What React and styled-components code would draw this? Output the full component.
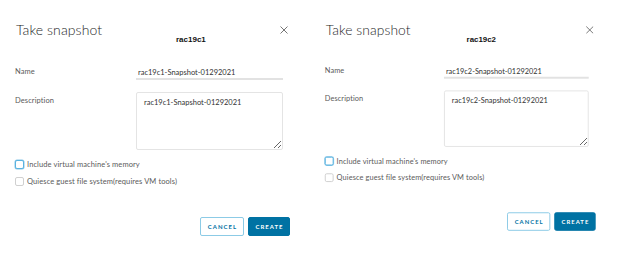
import React from 'react';
import styled, { createGlobalStyle } from 'styled-components';

const Global = createGlobalStyle`
  html, body {
    margin: 0;
    padding: 0;
    background: #ffffff;
  }
  body {
    font-family: Lato, "Open Sans", sans-serif;
    color: #333;
  }
`;

const Page = styled.div`
  display: flex;
  width: 624px;
  height: 265px;
  overflow: hidden;
`;

const Panel = styled.div`
  width: 310px;
  padding-left: 15px;
  box-sizing: border-box;
  transform-origin: 0 28px;
  transform: ${p => p.$scale ? `scale(${p.$scale})` : 'none'};
`;

const Dialog = styled.div`
  width: 275px;
  display: flex;
  flex-direction: column;
`;

const Header = styled.div`
  display: flex;
  align-items: flex-start;
  height: 20px;
  margin-top: 20px;
`;

const Title = styled.h3`
  margin: 0 0 0 1px;
  width: ${p => p.$nameX}px;
  font-size: 14px;
  font-weight: 300;
  line-height: 20px;
  color: #1e1e1e;
  letter-spacing: 0.1px;
`;

const VmName = styled.span`
  flex: 1;
  margin-top: 15px;
  font-family: "Liberation Sans", Arial, sans-serif;
  font-size: 8px;
  font-weight: 700;
  color: #111;
  line-height: 10px;
`;

const Close = styled.button`
  width: 12px;
  height: 12px;
  margin-top: 4px;
  padding: 0;
  border: 0;
  background: none;
  display: flex;
  align-items: center;
  justify-content: center;
`;

const Form = styled.div`
  display: grid;
  grid-template-columns: 121px 147px;
  row-gap: 12px;
  margin-top: 26px;
`;

const Label = styled.label`
  font-size: 7.5px;
  color: #5a5a5a;
  line-height: 12px;
  letter-spacing: 0.1px;
  padding-top: ${p => p.$pad || 0}px;
`;

const TextInput = styled.input`
  height: 12px;
  padding: 0 0 0 2px;
  border: 0;
  border-bottom: 2px solid #e2e2e2;
  font-family: Lato, "Open Sans", sans-serif;
  font-size: 7.5px;
  color: #333;
  outline: none;
  box-sizing: content-box;
  width: 145px;
`;

const TextArea = styled.textarea`
  height: 58px;
  box-sizing: border-box;
  padding: 5px 7px;
  border: 1px solid #e4e4e4;
  border-radius: 2px;
  font-family: Lato, "Open Sans", sans-serif;
  font-size: 7.5px;
  color: #333;
  resize: both;
  outline: none;
  width: 147px;
`;

const Checks = styled.div`
  display: flex;
  flex-direction: column;
  gap: 8px;
  margin-top: 10px;
`;

const CheckRow = styled.div`
  display: flex;
  align-items: center;
  gap: 3px;
  height: 9px;
  font-size: 7.5px;
  letter-spacing: 0.1px;
  color: #5a5a5a;
`;

const Box = styled.span`
  width: 9px;
  height: 9px;
  box-sizing: border-box;
  border-radius: 2px;
  border: 1px solid ${p => p.$focus ? '#5ab3e0' : '#d0d0d0'};
  box-shadow: ${p => p.$focus ? '0 0 0 0.5px #8cc8e8' : 'none'};
  background: #fff;
`;

const Footer = styled.div`
  display: flex;
  justify-content: flex-end;
  gap: 4px;
  margin-top: 31px;
`;

const Button = styled.button`
  height: 19px;
  width: ${p => p.$w}px;
  padding: 0 0 0 1px;
  border-radius: 2px;
  font-family: Lato, "Open Sans", sans-serif;
  font-size: 6px;
  font-weight: 700;
  letter-spacing: 1px;
  border: 1px solid ${p => p.$primary ? '#0072a3' : '#8ccbe6'};
  background: ${p => p.$primary ? '#0072a3' : '#fff'};
  color: ${p => p.$primary ? '#fff' : '#0072a3'};
`;

const CloseIcon = () => (
  <svg width="8" height="8" viewBox="0 0 8 8">
    <path d="M0.5 0.5 L7.5 7.5 M7.5 0.5 L0.5 7.5" stroke="#666" strokeWidth="0.9" fill="none" />
  </svg>
);

const SnapshotDialog = ({ vm, nameX, scale }) => (
  <Panel $scale={scale}>
    <Dialog>
      <Header>
        <Title $nameX={nameX}>Take snapshot</Title>
        <VmName>{vm}</VmName>
        <Close aria-label="Close"><CloseIcon /></Close>
      </Header>
      <Form>
        <Label>Name</Label>
        <TextInput readOnly value={`${vm}-Snapshot-01292021`} />
        <Label $pad={3}>Description</Label>
        <TextArea readOnly value={`${vm}-Snapshot-01292021`} />
      </Form>
      <Checks>
        <CheckRow><Box $focus />Include virtual machine's memory</CheckRow>
        <CheckRow><Box />Quiesce guest file system(requires VM tools)</CheckRow>
      </Checks>
      <Footer>
        <Button $w={44}>CANCEL</Button>
        <Button $w={42} $primary>CREATE</Button>
      </Footer>
    </Dialog>
  </Panel>
);

export default function App() {
  return (
    <>
      <Global />
      <Page>
        <SnapshotDialog vm="rac19c1" nameX={160} />
        <SnapshotDialog vm="rac19c2" nameX={143} scale="0.985, 0.975" />
      </Page>
    </>
  );
}
